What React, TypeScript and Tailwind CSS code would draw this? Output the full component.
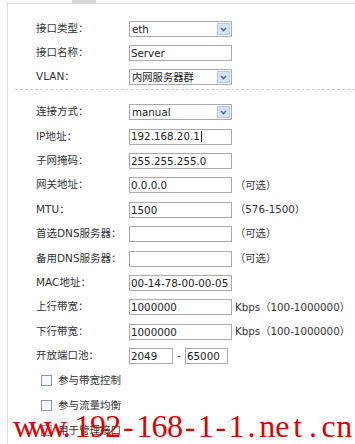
import React from 'react';

const font = { fontFamily: '"DejaVu Sans", "Noto Sans CJK SC", sans-serif' };

const Label: React.FC<{ text: string }> = ({ text }) => (
  <div className="w-[93px] shrink-0 text-[10.5px] text-[#333]">{text}</div>
);

const TextBox: React.FC<{ value?: string; width?: string; cursor?: boolean }> = ({ value = '', width = 'w-[103px]', cursor }) => (
  <div
    className={`${width} h-[16px] border border-[#a7abb0] bg-white flex items-center px-[1px] text-[10.3px] text-[#222] leading-none whitespace-nowrap overflow-hidden`}
  >
    <span>{value}</span>
    {cursor && <span className="w-px h-[11px] bg-black ml-[1px]" />}
  </div>
);

const Select: React.FC<{ value: string }> = ({ value }) => (
  <div className="w-[103px] h-[16px] border border-[#a7abb0] bg-white flex items-center pl-[2px] text-[10.3px] text-[#222] leading-none">
    <span className="flex-1">{value}</span>
    <div className="w-[13px] h-[12px] mr-[1px] bg-[#d5e3f7] border border-[#b3c8e8] flex items-center justify-center">
      <svg width="7" height="5" viewBox="0 0 7 5">
        <polyline points="1,1 3.5,3.5 6,1" fill="none" stroke="#4a6aa5" strokeWidth="1.6" />
      </svg>
    </div>
  </div>
);

const Note: React.FC<{ text: string }> = ({ text }) => (
  <div className="ml-[3px] text-[10.3px] text-[#333] whitespace-nowrap">{text}</div>
);

const Row: React.FC<{ h?: string; children: React.ReactNode }> = ({ h = 'h-[24px]', children }) => (
  <div className={`${h} flex items-center pl-[21px]`}>{children}</div>
);

const Check: React.FC<{ text: string }> = ({ text }) => (
  <div className="h-[25px] flex items-center pl-[26px]">
    <div className="w-[11px] h-[11px] border border-[#8a97ab] bg-[#f6f8fb]" />
    <span className="ml-[6px] text-[10.5px] text-[#333]">{text}</span>
  </div>
);

const mark = 'www.192-168-1-1.net.cn';

export default function App() {
  const r2 = 'h-[24.4px]';
  return (
    <div className="relative w-[355px] h-[444px] bg-white overflow-hidden" style={font}>
      <div className="h-[3px] flex">
        <div className="ml-[72px] w-[24px] h-[3px] bg-[#d6d6d6]" />
      </div>
      <div className="ml-[7px] h-[441px] border-l border-t border-[#dcdcdc] pt-[13px]">
        <div className="pl-[7px]">
          <Row>
            <Label text="接口类型：" />
            <Select value="eth" />
          </Row>
          <Row>
            <Label text="接口名称：" />
            <TextBox value="Server" />
          </Row>
          <Row>
            <Label text="VLAN：" />
            <Select value="内网服务器群" />
          </Row>
          <div className="border-b border-dashed border-[#cfcfcf] mb-[10px]" />

          <Row h={r2}>
            <Label text="连接方式：" />
            <Select value="manual" />
          </Row>
          <Row h={r2}>
            <Label text="IP地址：" />
            <TextBox value="192.168.20.1" cursor />
          </Row>
          <Row h={r2}>
            <Label text="子网掩码：" />
            <TextBox value="255.255.255.0" />
          </Row>
          <Row h={r2}>
            <Label text="网关地址：" />
            <TextBox value="0.0.0.0" />
            <Note text="（可选）" />
          </Row>
          <Row h={r2}>
            <Label text="MTU：" />
            <TextBox value="1500" />
            <Note text="（576-1500）" />
          </Row>
          <Row h={r2}>
            <Label text="首选DNS服务器：" />
            <TextBox />
            <Note text="（可选）" />
          </Row>
          <Row h={r2}>
            <Label text="备用DNS服务器：" />
            <TextBox />
            <Note text="（可选）" />
          </Row>
          <Row h={r2}>
            <Label text="MAC地址：" />
            <TextBox value="00-14-78-00-00-05" />
          </Row>
          <Row h={r2}>
            <Label text="上行带宽：" />
            <TextBox value="1000000" />
            <Note text="Kbps（100-1000000）" />
          </Row>
          <Row h={r2}>
            <Label text="下行带宽：" />
            <TextBox value="1000000" />
            <Note text="Kbps（100-1000000）" />
          </Row>
          <Row h={r2}>
            <Label text="开放端口池：" />
            <TextBox value="2049" width="w-[44px]" />
            <span className="w-[12px] text-center text-[10.5px] text-[#333]">-</span>
            <TextBox value="65000" width="w-[43px]" />
          </Row>

          <Check text="参与带宽控制" />
          <Check text="参与流量均衡" />
          <Check text="用于管理接口" />
        </div>
      </div>

      <div
        className="absolute left-[13px] top-[410px] flex text-[32px] leading-none text-[#e00000] whitespace-nowrap"
        style={{ fontFamily: '"Liberation Serif", serif' }}
      >
        {mark.split('').map((c, i) => (
          <span key={i} className="w-[15.4px] text-center">
            {c}
          </span>
        ))}
      </div>
    </div>
  );
}
